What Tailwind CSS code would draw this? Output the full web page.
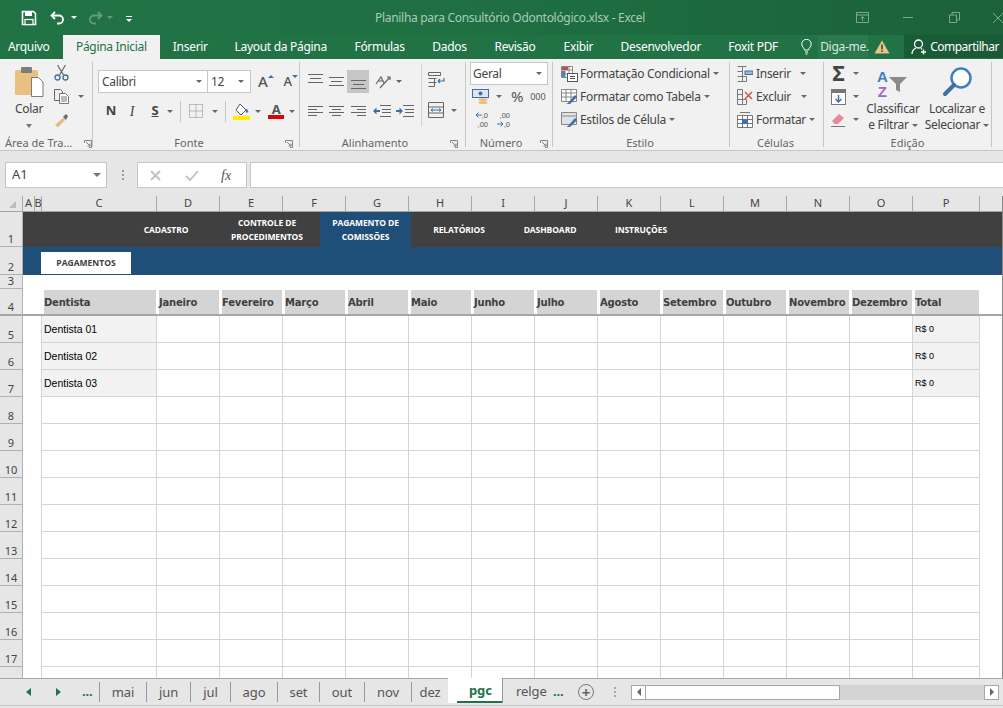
<!DOCTYPE html>
<html lang="pt-BR">
<head>
<meta charset="UTF-8">
<title>Planilha para Consultório Odontológico.xlsx - Excel</title>
<script src="https://cdn.jsdelivr.net/npm/@tailwindcss/browser@4"></script>
</head>
<body class="w-[1003px] h-[708px] overflow-hidden bg-[#e6e6e6] text-[#444] text-[12px] [font-family:'Noto_Sans',sans-serif]">

<!-- title bar -->
<div class="h-[35px] flex items-center bg-gradient-to-r from-[#217346] via-[#1f6f43] to-[#1b6139] text-white">
  <div class="w-[150px] flex-none flex items-center pl-[21px]">
    <svg class="w-[16px] h-[16px] flex-none" viewBox="0 0 16 16"><path d="M1.5 1.5h11l2 2v11h-13z" fill="none" stroke="#fff" stroke-width="1.6"/><rect x="4" y="2" width="7" height="4" fill="#fff"/><rect x="4" y="9.5" width="8" height="5" fill="#217346" stroke="#fff" stroke-width="1.2"/></svg>
    <svg class="w-[16px] h-[14px] ml-[13px] flex-none" viewBox="0 0 16 14"><path d="M5 1 1.5 4.5 5 8M2 4.500h7a4 4 0 0 1 0 8H7" fill="none" stroke="#fff" stroke-width="1.8"/></svg>
    <div class="ml-[5px] w-0 h-0 border-x-[3px] border-x-transparent border-t-[3px] border-t-white"></div>
    <svg class="w-[16px] h-[14px] ml-[10px] flex-none opacity-30" viewBox="0 0 16 14"><path d="M11 1l3.500 3.500L11 8M14 4.500H7a4 4 0 0 0 0 8h2" fill="none" stroke="#fff" stroke-width="1.8"/></svg>
    <div class="ml-[4px] w-0 h-0 border-x-[3px] border-x-transparent border-t-[3px] border-t-white opacity-30"></div>
    <div class="ml-[13px] flex flex-col items-center gap-[2px] mt-[2px]"><div class="w-[6px] h-px bg-white"></div><div class="w-0 h-0 border-x-[3px] border-x-transparent border-t-[3px] border-t-white"></div></div>
  </div>
  <div class="w-[720px] flex-none text-center text-[#a9cbb8] tracking-[-0.3px] mt-[1px]">Planilha para Consultório Odontológico.xlsx - Excel</div>
  <svg class="w-[13px] h-[12px] ml-[-14px] flex-none" viewBox="0 0 13 12"><path d="M.5.500h12v10H.5zM.5 3h12M6.500 9V5M4.500 6.500l2-2 2 2" fill="none" stroke="#7fa892"/></svg>
  <div class="w-[10px] h-px bg-[#7fa892] ml-[34px] flex-none"></div>
  <svg class="w-[11px] h-[11px] ml-[36px] flex-none" viewBox="0 0 11 11"><path d="M.5 3h7v7.500h-7zM3 3V.5h7.500V8H8" fill="none" stroke="#7fa892"/></svg>
  <svg class="w-[10px] h-[10px] ml-[33px] flex-none" viewBox="0 0 10 10"><path d="M0 0l10 10M10 0 0 10" stroke="#7fa892"/></svg>
</div>

<!-- ribbon tabs -->
<div class="h-[24px] flex bg-[#217346] text-white leading-[24px] tracking-[-0.3px] whitespace-nowrap">
  <div class="w-[63px] pl-[8px]">Arquivo</div>
  <div class="w-[97px] text-center bg-[#f1f1f1] text-[#217346]">Página Inicial</div>
  <div class="w-[61px] text-center">Inserir</div>
  <div class="w-[120px] text-center">Layout da Página</div>
  <div class="w-[78px] text-center">Fórmulas</div>
  <div class="w-[62px] text-center">Dados</div>
  <div class="w-[69px] text-center">Revisão</div>
  <div class="w-[58px] text-center">Exibir</div>
  <div class="w-[107px] text-center">Desenvolvedor</div>
  <div class="w-[78px] text-center">Foxit PDF</div>
  <div class="w-[26px] flex items-center pl-[9px]">
    <svg class="w-[11px] h-[16px] flex-none" viewBox="0 0 11 16"><path d="M3.500 11C3 8.500.8 8 .8 5a4.700 4.700 0 0 1 9.400 0c0 3-2.200 3.500-2.700 6zM4 13h3M4.500 15h2" fill="none" stroke="#fff"/></svg>
  </div>
  <div class="w-[50px] bg-[#2b7a4f] pl-[2px] text-[#d7e8de]">Diga-me.</div>
  <div class="w-[36px] flex items-center pl-[6px]">
    <svg class="w-[16px] h-[14px] flex-none" viewBox="0 0 16 14"><path d="M8 .5 15.500 13.500H.5z" fill="#e8c486"/><path d="M8 4.500v5M8 10.500v1.500" stroke="#3b3b3b" stroke-width="1.500"/></svg>
  </div>
  <div class="w-[99px] h-[23px] bg-[#195a37] flex items-center pl-[7px] gap-[3px] overflow-hidden tracking-[-0.5px]">
    <svg class="w-[16px] h-[16px] flex-none" viewBox="0 0 16 16"><circle cx="7.500" cy="5" r="4" fill="none" stroke="#fff" stroke-width="1.300"/><path d="M1 15c0-3 2-5 4-6M10 9l1 1.500M12.500 10.500v5M10 13h5" fill="none" stroke="#fff" stroke-width="1.300"/></svg>
    <span>Compartilhar</span>
  </div>
</div>

<!-- ribbon -->
<div class="h-[92px] flex pt-[3px] bg-[#f1f1f1] border-b border-[#c6c6c6] whitespace-nowrap tracking-[-0.3px]">

  <!-- clipboard -->
  <div class="w-[93px] h-[85px] flex flex-col border-r border-[#c6c6c6] flex-none">
    <div class="h-[73px] flex">
      <div class="w-[54px] pl-[4px] flex flex-col items-center">
        <svg class="w-[30px] h-[31px] mt-[4px] flex-none" viewBox="0 0 30 31"><rect x="1" y="4" width="23" height="25" rx="1.500" fill="#e8c07f"/><rect x="7" y="1" width="11" height="6" rx="1" fill="#7d7d7d"/><path d="M17.500 11.500h7l4.500 4.500v14.500h-11.500z" fill="#fff" stroke="#7d7d7d"/></svg>
        <div class="mt-[4px] leading-[16px]">Colar</div>
        <div class="mt-[7px] w-0 h-0 border-x-[3.500px] border-x-transparent border-t-[4px] border-t-[#777]"></div>
      </div>
      <div class="w-[38px] flex flex-col">
        <svg class="w-[15px] h-[16px] mt-[3px] flex-none" viewBox="0 0 15 16"><path d="M3.500 0l6 10M11.500 0l-6 10" stroke="#666" stroke-width="1.200"/><circle cx="3.500" cy="12.500" r="2.500" fill="none" stroke="#3f6fa5" stroke-width="1.300"/><circle cx="11.500" cy="12.500" r="2.500" fill="none" stroke="#3f6fa5" stroke-width="1.300"/></svg>
        <div class="flex items-center mt-[8px]">
          <svg class="w-[16px] h-[15px] flex-none" viewBox="0 0 16 15"><path d="M.5.500h6l2 2v2M.5.500v11h5" fill="none" stroke="#666"/><path d="M5.500 4.500h6l3 3v7h-9zM7 8h6M7 10h6M7 12h6" fill="#fff" stroke="#666" stroke-width=".9"/></svg>
          <div class="ml-[8px] w-0 h-0 border-x-[3px] border-x-transparent border-t-[3px] border-t-[#666]"></div>
        </div>
        <svg class="w-[16px] h-[16px] mt-[8px] flex-none" viewBox="0 0 16 16"><path d="M9 6 1 13l3 2.500L11 8z" fill="#e2bd82"/><path d="m9 5 3-3 2 2-2 4z" fill="#6b6b6b"/></svg>
      </div>
    </div>
    <div class="h-[12px] leading-[16px] flex items-start pl-[5px] text-[#666] text-[11px] tracking-normal"><span class="w-[80px]">Área de Tra...</span>
      <svg class="w-[8px] h-[8px] mt-[5px] flex-none" viewBox="0 0 8 8"><path d="M.5 3V.5H7.500V7.500H5M2 2l4 4M6 3.500V6H3.500" fill="none" stroke="#777" stroke-width=".9"/></svg>
    </div>
  </div>

  <!-- font -->
  <div class="w-[207px] h-[85px] flex flex-col border-r border-[#c6c6c6] flex-none">
    <div class="h-[73px] pl-[5px] pt-[8px]">
      <div class="flex items-center h-[23px]">
        <div class="w-[110px] h-[23px] bg-white border border-[#c6c6c6] flex items-center justify-between px-[3px] pr-[5px]"><span>Calibri</span><div class="w-0 h-0 border-x-[3px] border-x-transparent border-t-[3px] border-t-[#666]"></div></div>
        <div class="w-[43px] h-[23px] bg-white border border-[#c6c6c6] border-l-0 flex items-center justify-between px-[3px] pr-[6px]"><span>12</span><div class="w-0 h-0 border-x-[3px] border-x-transparent border-t-[3px] border-t-[#666]"></div></div>
        <span class="ml-[7px] text-[15px] font-medium leading-none text-[#555]">A</span><div class="w-0 h-0 mb-[10px] border-x-[3px] border-x-transparent border-b-[3px] border-b-[#3f6fa5]"></div>
        <span class="ml-[10px] text-[13px] font-medium leading-none text-[#555]">A</span><div class="w-0 h-0 mb-[10px] border-x-[3px] border-x-transparent border-t-[3px] border-t-[#3f6fa5]"></div>
      </div>
      <div class="flex items-center h-[22px] mt-[7px] text-[13px] text-[#444]">
        <span class="ml-[6px] w-[14px] font-bold text-center">N</span>
        <span class="ml-[7px] w-[14px] italic text-center [font-family:'Liberation_Serif',serif] text-[14px]">I</span>
        <span class="ml-[9px] w-[14px] font-bold underline text-center">S</span>
        <div class="ml-[5px] w-0 h-0 border-x-[3px] border-x-transparent border-t-[3px] border-t-[#666]"></div>
        <div class="ml-[7px] w-px h-[21px] bg-[#c6c6c6]"></div>
        <svg class="ml-[8px] w-[14px] h-[14px] flex-none" viewBox="0 0 14 14"><path d="M.5.500h13v13H.5zM7 .5v13M.5 7h13" fill="none" stroke="#888" stroke-dasharray="1 1"/></svg>
        <div class="ml-[9px] w-0 h-0 border-x-[3px] border-x-transparent border-t-[3px] border-t-[#666]"></div>
        <div class="ml-[7px] w-px h-[21px] bg-[#c6c6c6]"></div>
        <svg class="ml-[7px] w-[17px] h-[17px] flex-none" viewBox="0 0 17 17"><path d="m7 1 6 6-5 5-5-5z" fill="#fff" stroke="#555"/><path d="m12 6 2 0 1.500 3-2 1z" fill="#3f6fa5"/><rect x="0" y="13" width="17" height="4" fill="#ffee00"/></svg>
        <div class="ml-[5px] w-0 h-0 border-x-[3px] border-x-transparent border-t-[3px] border-t-[#666]"></div>
        <div class="ml-[7px] w-[16px] flex flex-col items-center leading-[12px]"><span class="font-bold text-[13px] text-[#555]">A</span><div class="w-[16px] h-[4px] bg-[#e00000]"></div></div>
        <div class="ml-[5px] w-0 h-0 border-x-[3px] border-x-transparent border-t-[3px] border-t-[#666]"></div>
      </div>
    </div>
    <div class="h-[12px] leading-[16px] flex items-start text-[#666] text-[11px] tracking-normal"><span class="w-[192px] text-center">Fonte</span>
      <svg class="w-[8px] h-[8px] mt-[5px] flex-none" viewBox="0 0 8 8"><path d="M.5 3V.5H7.500V7.500H5M2 2l4 4M6 3.500V6H3.500" fill="none" stroke="#777" stroke-width=".9"/></svg>
    </div>
  </div>

  <!-- alignment -->
  <div class="w-[166px] h-[85px] flex flex-col border-r border-[#c6c6c6] flex-none">
    <div class="h-[73px] flex">
      <div class="w-[122px] pl-[8px] pt-[8px] border-r border-[#d4d4d4] h-[62px] mt-[2px]">
        <div class="flex items-center h-[23px] -mt-[2px]">
          <svg class="w-[15px] h-[9px] mb-[6px] flex-none" viewBox="0 0 15 9"><path d="M0 .5h15M2 4.500h11M0 8.500h15" stroke="#666"/></svg>
          <svg class="ml-[6px] w-[15px] h-[9px] flex-none" viewBox="0 0 15 9"><path d="M0 .5h15M2 4.500h11M0 8.500h15" stroke="#666"/></svg>
          <div class="ml-[3px] w-[22px] h-[23px] bg-[#c6c6c6] flex items-end justify-center pb-[4px]"><svg class="w-[15px] h-[9px] flex-none" viewBox="0 0 15 9"><path d="M0 .5h15M2 4.500h11M0 8.500h15" stroke="#666"/></svg></div>
          <svg class="ml-[5px] w-[17px] h-[15px] flex-none" viewBox="0 0 17 15"><path d="M2 10 7 3l3 6M4 7h5M6 14 16 3M13 3h3v3" fill="none" stroke="#666" stroke-width="1.200"/></svg>
          <div class="ml-[5px] w-0 h-0 border-x-[3px] border-x-transparent border-t-[3px] border-t-[#666]"></div>
        </div>
        <div class="flex items-center h-[22px] mt-[7px]">
          <svg class="w-[15px] h-[10px] flex-none" viewBox="0 0 15 10"><path d="M0 .5h15M0 3.500h9M0 6.500h15M0 9.500h9" stroke="#666"/></svg>
          <svg class="ml-[6px] w-[15px] h-[10px] flex-none" viewBox="0 0 15 10"><path d="M0 .5h15M3 3.500h9M0 6.500h15M3 9.500h9" stroke="#666"/></svg>
          <svg class="ml-[7px] w-[15px] h-[10px] flex-none" viewBox="0 0 15 10"><path d="M0 .5h15M6 3.500h9M0 6.500h15M6 9.500h9" stroke="#666"/></svg>
          <svg class="ml-[7px] w-[18px] h-[12px] flex-none" viewBox="0 0 18 12"><path d="M7 .5h11M9 4.500h9M9 7.500h9M7 11.500h11" stroke="#666"/><path d="M0 6l3.500-3.500V5H7v2H3.500v2.500z" fill="#3f6fa5"/></svg>
          <svg class="ml-[5px] w-[18px] h-[12px] flex-none" viewBox="0 0 18 12"><path d="M7 .5h11M9 4.500h9M9 7.500h9M7 11.500h11" stroke="#666"/><path d="M7 6 3.500 2.500V5H0v2h3.500v2.500z" fill="#3f6fa5"/></svg>
        </div>
      </div>
      <div class="pl-[6px] pt-[8px]">
        <svg class="mt-[2px] w-[17px] h-[16px] flex-none" viewBox="0 0 17 16"><path d="M.5.500h12v3H.5zM.5 6.500h8M.5 10.500h8M.5 14.500h6V6.500" fill="none" stroke="#666"/><path d="M10 9h6v-3M10 9l2-2M10 9l2 2" fill="none" stroke="#3f6fa5" stroke-width="1.200"/></svg>
        <div class="flex items-center mt-[14px]">
          <svg class="w-[16px] h-[16px] flex-none" viewBox="0 0 16 16"><path d="M.5.500h15v15H.5zM.5 5h15M.5 11h15" fill="none" stroke="#666"/><path d="M3 8h10M3 8l2-1.500M3 8l2 1.500M13 8l-2-1.500M13 8l-2 1.500" fill="none" stroke="#3f6fa5"/></svg>
          <div class="ml-[7px] w-0 h-0 border-x-[3px] border-x-transparent border-t-[3px] border-t-[#666]"></div>
        </div>
      </div>
    </div>
    <div class="h-[12px] leading-[16px] flex items-start text-[#666] text-[11px] tracking-normal"><span class="w-[150px] text-center">Alinhamento</span>
      <svg class="w-[8px] h-[8px] mt-[5px] flex-none" viewBox="0 0 8 8"><path d="M.5 3V.5H7.500V7.500H5M2 2l4 4M6 3.500V6H3.500" fill="none" stroke="#777" stroke-width=".9"/></svg>
    </div>
  </div>

  <!-- number -->
  <div class="w-[87px] h-[85px] flex flex-col border-r border-[#c6c6c6] flex-none">
    <div class="h-[73px] pl-[4px]">
      <div class="w-[78px] h-[23px] bg-white border border-[#c6c6c6] flex items-center justify-between px-[2px] pr-[5px]"><span>Geral</span><div class="w-0 h-0 border-x-[3px] border-x-transparent border-t-[3px] border-t-[#666]"></div></div>
      <div class="flex items-center h-[23px] pl-[2px]">
        <svg class="w-[17px] h-[16px] flex-none" viewBox="0 0 17 16"><rect x=".5" y=".5" width="16" height="8" fill="#dbe6f2" stroke="#3f6fa5"/><circle cx="8.500" cy="4.500" r="2" fill="#3f6fa5"/><ellipse cx="11" cy="10.500" rx="4.500" ry="1.500" fill="#e8c07f"/><ellipse cx="11" cy="13.500" rx="4.500" ry="1.500" fill="#e8c07f"/></svg>
        <div class="ml-[7px] w-0 h-0 border-x-[3px] border-x-transparent border-t-[3px] border-t-[#666]"></div>
        <span class="ml-[9px] text-[15px] leading-none text-[#555]">%</span>
        <span class="ml-[7px] text-[9px] text-[#555] tracking-normal">000</span>
      </div>
      <div class="flex items-center h-[23px] pl-[3px] text-[7.500px] leading-[9px] text-[#555] tracking-normal [font-family:'Liberation_Sans',sans-serif]">
        <div class="w-[15px] flex flex-col items-end">
          <div class="flex items-center"><svg class="w-[7px] h-[6px] flex-none" viewBox="0 0 7 6"><path d="M7 3H1M3.500.5 1 3l2.500 2.500" fill="none" stroke="#3f6fa5"/></svg><span>,0</span></div>
          <span>,00</span>
        </div>
        <div class="ml-[7px] w-[15px] flex flex-col items-end">
          <span>,00</span>
          <div class="flex items-center"><svg class="w-[7px] h-[6px] flex-none" viewBox="0 0 7 6"><path d="M0 3h6M3.500.5 6 3 3.500 5.500" fill="none" stroke="#3f6fa5"/></svg><span>,0</span></div>
        </div>
      </div>
    </div>
    <div class="h-[12px] leading-[16px] flex items-start text-[#666] text-[11px] tracking-normal"><span class="w-[70px] text-center">Número</span>
      <svg class="w-[8px] h-[8px] mt-[5px] ml-[4px] flex-none" viewBox="0 0 8 8"><path d="M.5 3V.5H7.500V7.500H5M2 2l4 4M6 3.500V6H3.500" fill="none" stroke="#777" stroke-width=".9"/></svg>
    </div>
  </div>

  <!-- styles -->
  <div class="w-[177px] h-[85px] flex flex-col border-r border-[#c6c6c6] flex-none">
    <div class="h-[73px] pl-[8px] flex flex-col">
      <div class="flex items-center h-[23px]"><svg class="w-[17px] h-[16px] flex-none" viewBox="0 0 17 16"><path d="M.5.500h11v11H.5zM.5 4h11M.5 8h11M4 .5v11M8 .5v11" fill="#fff" stroke="#888"/><rect x="1" y="1" width="6" height="3" fill="#c0504d"/><rect x="1" y="5" width="3" height="6" fill="#4f81bd"/><rect x="6.500" y="7.500" width="10" height="8" fill="#fff" stroke="#555"/><path d="M9 10.500h5M9 12.500h5" stroke="#555"/></svg><span class="ml-[2px]">Formatação Condicional</span><div class="ml-[3px] w-0 h-0 border-x-[3px] border-x-transparent border-t-[3px] border-t-[#666]"></div></div>
      <div class="flex items-center h-[23px]"><svg class="w-[17px] h-[16px] flex-none" viewBox="0 0 17 16"><path d="M.5.500h15v12H.5zM.5 4h15M.5 8h15M5 .5v12M10 .5v12" fill="#fff" stroke="#888"/><path d="M7 14 14 6l2 2-7 7H5z" fill="#3f6fa5"/></svg><span class="ml-[2px]">Formatar como Tabela</span><div class="ml-[3px] w-0 h-0 border-x-[3px] border-x-transparent border-t-[3px] border-t-[#666]"></div></div>
      <div class="flex items-center h-[23px]"><svg class="w-[17px] h-[16px] flex-none" viewBox="0 0 17 16"><path d="M.5.500h15v12H.5zM.5 4h15" fill="#dfe3e8" stroke="#888"/><path d="M7 14 14 6l2 2-7 7H5z" fill="#3f6fa5"/></svg><span class="ml-[2px]">Estilos de Célula</span><div class="ml-[3px] w-0 h-0 border-x-[3px] border-x-transparent border-t-[3px] border-t-[#666]"></div></div>
    </div>
    <div class="h-[12px] leading-[16px] text-center text-[#666] text-[11px] tracking-normal pr-[2px]">Estilo</div>
  </div>

  <!-- cells -->
  <div class="w-[94px] h-[85px] flex flex-col border-r border-[#c6c6c6] flex-none">
    <div class="h-[73px] pl-[7px] flex flex-col">
      <div class="flex items-center h-[23px]"><svg class="w-[16px] h-[16px] flex-none" viewBox="0 0 16 16"><path d="M.5.500h5v15h-5M5.500.5h4M.5 5.500h5M.5 10.500h9M9.500 10.500v5h-4" fill="none" stroke="#777"/><rect x="8" y="5" width="8" height="3.500" fill="#9db8d6" stroke="#3f6fa5"/></svg><span class="ml-[3px]">Inserir</span><div class="ml-[9px] w-0 h-0 border-x-[3px] border-x-transparent border-t-[3px] border-t-[#666]"></div></div>
      <div class="flex items-center h-[23px]"><svg class="w-[16px] h-[16px] flex-none" viewBox="0 0 16 16"><path d="M.5.500h5v15h-5zM.5 5.500h5M.5 10.500h9v5h-4" fill="none" stroke="#777"/><path d="m8 3 7 7M15 3l-7 7" stroke="#d9534f" stroke-width="1.500"/></svg><span class="ml-[3px]">Excluir</span><div class="ml-[10px] w-0 h-0 border-x-[3px] border-x-transparent border-t-[3px] border-t-[#666]"></div></div>
      <div class="flex items-center h-[23px]"><svg class="w-[16px] h-[16px] flex-none" viewBox="0 0 16 16"><path d="M.5 3.500h15v12H.5zM.5 7.500h15M.5 11.500h15M5.500 3.500v12M10.500 3.500v12M3 .5h10" fill="#fff" stroke="#777"/><rect x="5" y="7" width="6" height="5" fill="#3f6fa5"/></svg><span class="ml-[3px]">Formatar</span><div class="ml-[3px] w-0 h-0 border-x-[3px] border-x-transparent border-t-[3px] border-t-[#666]"></div></div>
    </div>
    <div class="h-[12px] leading-[16px] text-center text-[#666] text-[11px] tracking-normal pr-[2px]">Células</div>
  </div>

  <!-- editing -->
  <div class="w-[168px] h-[85px] flex flex-col border-r border-[#c6c6c6] flex-none">
    <div class="h-[73px] flex">
      <div class="w-[48px] pl-[7px] flex flex-col">
        <div class="flex items-center h-[23px]"><span class="w-[15px] text-[21px] leading-none font-bold text-[#444] text-center">Σ</span><div class="ml-[7px] w-0 h-0 border-x-[3px] border-x-transparent border-t-[3px] border-t-[#666]"></div></div>
        <div class="flex items-center h-[23px]"><svg class="w-[15px] h-[16px] flex-none" viewBox="0 0 15 16"><rect x=".5" y=".5" width="14" height="15" fill="#fff" stroke="#777"/><rect x="1" y="1" width="13" height="3" fill="#777"/><path d="M7.500 6v7M4.500 10l3 3 3-3" fill="none" stroke="#3f6fa5" stroke-width="1.500"/></svg><div class="ml-[7px] w-0 h-0 border-x-[3px] border-x-transparent border-t-[3px] border-t-[#666]"></div></div>
        <div class="flex items-center h-[23px]"><svg class="w-[15px] h-[14px] flex-none" viewBox="0 0 15 14"><path d="M1 8 8 1l5 4-6 6H3.500z" fill="#e58a9b"/><path d="M0 13.500h14" stroke="#777"/></svg><div class="ml-[7px] w-0 h-0 border-x-[3px] border-x-transparent border-t-[3px] border-t-[#666]"></div></div>
      </div>
      <div class="w-[62px] -ml-[10px] flex flex-col items-center">
        <div class="h-[34px] mt-[5px] w-[32px] flex items-center">
          <div class="flex flex-col items-center text-[15px] leading-[15px] [font-family:'Liberation_Sans',sans-serif] font-bold"><span class="text-[#3f7fc0]">A</span><span class="text-[#9b6bc4]">Z</span></div>
          <svg class="w-[18px] h-[17px] ml-[1px] flex-none" viewBox="0 0 18 17"><path d="M0 1h18l-7 7v8l-4-2V8z" fill="#8a8a8a"/></svg>
        </div>
        <div class="leading-[16px]">Classificar</div>
        <div class="leading-[16px] flex items-center">e Filtrar<div class="ml-[3px] w-0 h-0 border-x-[3px] border-x-transparent border-t-[3px] border-t-[#666]"></div></div>
      </div>
      <div class="w-[66px] flex flex-col items-center">
        <svg class="w-[29px] h-[30px] mt-[5px] flex-none" viewBox="0 0 29 30"><circle cx="18" cy="11" r="9.500" fill="#fff" stroke="#3f7fc0" stroke-width="2.500"/><path d="M11 18 2 27" stroke="#3f6fa5" stroke-width="4" stroke-linecap="round"/></svg>
        <div class="leading-[16px] mt-[4px]">Localizar e</div>
        <div class="leading-[16px] flex items-center">Selecionar<div class="ml-[3px] w-0 h-0 border-x-[3px] border-x-transparent border-t-[3px] border-t-[#666]"></div></div>
      </div>
    </div>
    <div class="h-[12px] leading-[16px] text-center text-[#666] text-[11px] tracking-normal">Edição</div>
  </div>
</div>

<!-- formula bar -->
<div class="h-[45px] bg-[#e6e6e6] pt-[11px] pl-[5px] flex items-start">
  <div class="w-[102px] h-[26px] bg-white border border-[#c6c6c6] flex items-center justify-between pl-[6px] pr-[5px] text-[13px]"><span>A1</span><div class="w-0 h-0 border-x-[4px] border-x-transparent border-t-[4px] border-t-[#777]"></div></div>
  <div class="ml-[15px] mt-[8px] w-[2px] h-[10px] border-l-2 border-dotted border-[#999]"></div>
  <div class="ml-[13px] w-[110px] h-[26px] bg-white border border-[#c6c6c6] flex items-center pl-[12px]">
    <svg class="w-[11px] h-[11px] flex-none" viewBox="0 0 11 11"><path d="m1 1 9 9M10 1l-9 9" stroke="#c0c0c0" stroke-width="1.800"/></svg>
    <svg class="ml-[24px] w-[14px] h-[11px] flex-none" viewBox="0 0 14 11"><path d="m1 6 4 4 8-9" fill="none" stroke="#c0c0c0" stroke-width="1.800"/></svg>
    <span class="ml-[22px] italic [font-family:'Liberation_Serif',serif] text-[14px] text-[#555]">fx</span>
  </div>
  <div class="ml-[3px] flex-1 h-[26px] bg-white border border-[#c6c6c6] border-r-0"></div>
</div>

<!-- sheet, rows are built below -->
<div id="sheet" class="h-[482px] overflow-hidden bg-white border-r border-[#888] text-[10px] [font-family:'Liberation_Sans',sans-serif]"></div>

<!-- sheet tabs -->
<div class="relative h-[28px] border-t border-b border-t-[#a6a6a6] border-b-[#c6c6c6] flex items-center text-[13px] text-[#555] tracking-[-0.1px] whitespace-nowrap">
  <div class="ml-[26px] w-0 h-0 border-y-[4px] border-y-transparent border-r-[5px] border-r-[#217346]"></div>
  <div class="ml-[25px] w-0 h-0 border-y-[4px] border-y-transparent border-l-[5px] border-l-[#217346]"></div>
  <div class="ml-[21px] w-[17px] font-bold text-[#217346]">...</div>
  <div class="flex h-[20px] leading-[20px]">
    <div class="w-[47px] text-center border-l border-[#999]">mai</div>
    <div class="w-[44px] text-center border-l border-[#999]">jun</div>
    <div class="w-[40px] text-center border-l border-[#999]">jul</div>
    <div class="w-[47px] text-center border-l border-[#999]">ago</div>
    <div class="w-[42px] text-center border-l border-[#999]">set</div>
    <div class="w-[45px] text-center border-l border-[#999]">out</div>
    <div class="w-[47px] text-center border-l border-[#999]">nov</div>
    <div class="w-[37px] text-center border-l border-[#999]">dez</div>
  </div>
  <div class="absolute left-[448px] -top-px w-[55px] h-[25px] bg-white border-r border-[#999] pl-[21px] leading-[24px] font-bold text-[#217346]">pgc<div class="absolute left-[9px] bottom-0 right-0 h-[2px] bg-[#217346]"></div></div>
  <div class="ml-[68px] w-[37px]">relge</div>
  <div class="w-[28px] font-bold text-[#217346]">...</div>
  <div class="-ml-[3px] w-[16px] h-[16px] rounded-full border border-[#777] flex items-center justify-center text-[15px] leading-none font-bold text-[#666]">+</div>
  <div class="ml-[20px] w-[2px] h-[10px] border-l-2 border-dotted border-[#aaa]"></div>
  <div class="ml-[15px] flex h-[15px] w-[368px] bg-[#d4d4d4]">
    <div class="w-[15px] bg-white border border-[#a6a6a6] flex items-center justify-center"><div class="w-0 h-0 border-y-[4px] border-y-transparent border-r-[4px] border-r-[#666]"></div></div>
    <div class="w-[194px] bg-white border-y border-r border-[#a6a6a6]"></div>
    <div class="flex-1"></div>
    <div class="w-[15px] bg-white border border-[#a6a6a6] flex items-center justify-center"><div class="w-0 h-0 border-y-[4px] border-y-transparent border-l-[4px] border-l-[#666]"></div></div>
  </div>
</div>

<script>
  var months = ["Janeiro","Fevereiro","Março","Abril","Maio","Junho","Julho","Agosto","Setembro","Outubro","Novembro","Dezembro"];
  var letters = "DEFGHIJKLMNO".split("");
  var rowHead = "w-[23px] flex-none bg-[#e6e6e6] border-r border-b border-[#b1b1b1] flex items-end justify-center text-[11px] text-[#444] [font-family:'Noto_Sans',sans-serif] leading-[14px]";
  var cell = "w-[63px] flex-none border-r border-b border-[#d4d4d4]";
  var html = "";

  // column letters
  var colHead = "h-[16px] flex-none bg-[#e6e6e6] border-r border-b border-[#a6a6a6] flex items-center justify-center text-[11px] text-[#444] [font-family:'Noto_Sans',sans-serif]";
  html += '<div class="flex"><div class="w-[23px] ' + colHead + '"><div class="w-0 h-0 ml-[3px] mt-[2px] border-l-[7px] border-l-transparent border-b-[7px] border-b-[#bbb]"></div></div>';
  html += '<div class="w-[12px] ' + colHead + '">A</div><div class="w-[7px] ' + colHead + '">B</div><div class="w-[115px] ' + colHead + '">C</div>';
  letters.forEach(function (l) { html += '<div class="w-[63px] ' + colHead + '">' + l + '</div>'; });
  html += '<div class="w-[67px] ' + colHead + '">P</div><div class="w-[22px] ' + colHead + ' border-r-0"></div></div>';

  // row 1, main menu
  var navCell = "flex items-center justify-center text-center font-bold text-[8.500px] leading-[14px] text-white [font-family:'Open_Sans',sans-serif] tracking-[-0.1px] pt-[1px]";
  html += '<div class="flex h-[35px]"><div class="' + rowHead + '">1</div><div class="flex-1 flex bg-[#404040]"><div class="w-[106px]"></div>' +
    '<div class="w-[74px] ' + navCell + '">CADASTRO</div><div class="ml-[14px] mr-[3px] w-[100px] ' + navCell + '">CONTROLE DE<br>PROCEDIMENTOS</div>' +
    '<div class="w-[91px] bg-[#1f4e79] ' + navCell + '">PAGAMENTO DE<br>COMISSÕES</div><div class="w-[96px] ' + navCell + '">RELATÓRIOS</div>' +
    '<div class="w-[86px] ' + navCell + '">DASHBOARD</div><div class="w-[96px] ' + navCell + '">INSTRUÇÕES</div></div></div>';

  // row 2, sub menu
  html += '<div class="flex h-[28px]"><div class="' + rowHead + '">2</div><div class="flex-1 bg-[#1f4e79] pl-[18px] pt-[5px]">' +
    '<div class="w-[90px] h-[22px] bg-white flex items-center justify-center font-bold text-[8.500px] text-[#404040] [font-family:\'Open_Sans\',sans-serif]">PAGAMENTOS</div></div></div>';

  // row 3, spacer
  html += '<div class="flex h-[14px]"><div class="' + rowHead + '">3</div><div class="flex-1"></div></div>';

  // row 4, table head
  var th = "h-[24px] mt-[1px] ml-[2px] mr-px flex-1 bg-[#d4d4d4] flex items-center pt-[1px] font-bold text-[10px] text-[#3f3f3f] [font-family:'DejaVu_Sans',sans-serif] tracking-[-0.2px] whitespace-nowrap";
  html += '<div class="flex h-[27px] border-b-2 border-[#a6a6a6]"><div class="w-[23px] flex-none bg-[#e6e6e6] border-r border-[#b1b1b1] flex items-end justify-center text-[11px] text-[#444] [font-family:\'Noto_Sans\',sans-serif] leading-[14px]">4</div><div class="w-[19px] flex-none"></div>';
  html += '<div class="w-[115px] flex-none flex"><div class="' + th + '">Dentista</div></div>';
  months.forEach(function (m) { html += '<div class="w-[63px] flex-none flex"><div class="' + th + '">' + m + '</div></div>'; });
  html += '<div class="w-[67px] flex-none flex"><div class="' + th + '">Total</div></div></div>';

  // rows 5 to 18
  for (var r = 5; r <= 18; r++) {
    var filled = r <= 7;
    var name = filled ? "Dentista 0" + (r - 4) : "";
    var total = filled ? "R$ 0" : "";
    var bg = filled ? "bg-[#f2f2f2]" : "bg-white";
    html += '<div class="flex h-[27px]"><div class="' + rowHead + '">' + (r < 18 ? r : "") + '</div><div class="w-[19px] flex-none border-r border-[#d4d4d4]"></div>';
    html += '<div class="w-[115px] flex-none border-r border-b border-[#d4d4d4] flex items-center pl-[2px] pt-[1px] text-[10.500px] text-black ' + bg + '">' + name + '</div>';
    for (var c = 0; c < 12; c++) html += '<div class="' + cell + '"></div>';
    html += '<div class="w-[67px] flex-none border-r border-b border-[#d4d4d4] flex items-center pl-[2px] pt-[1px] text-[9px] text-black ' + bg + '">' + total + '</div></div>';
  }
  document.getElementById("sheet").innerHTML = html;
</script>
</body>
</html>
